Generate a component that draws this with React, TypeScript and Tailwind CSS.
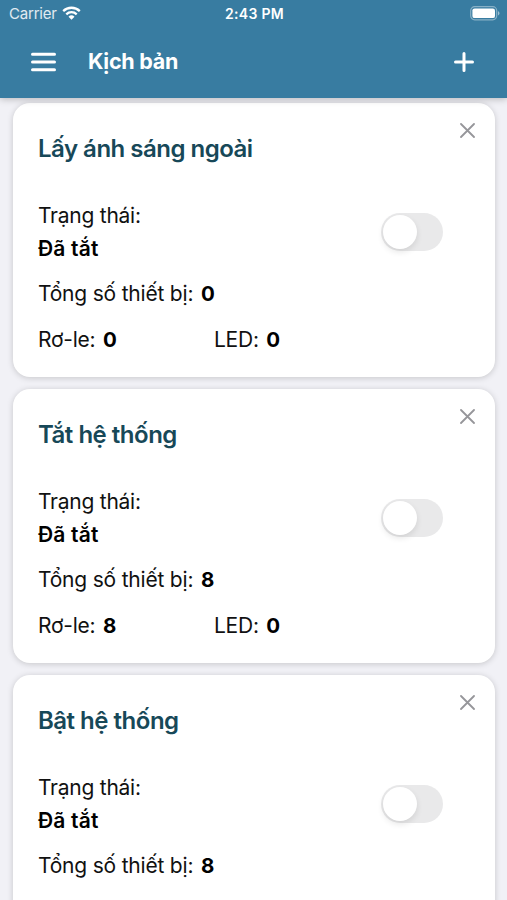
type Scenario = {
  id: number;
  name: string;
  total: number;
  relays?: number;
  leds?: number;
};

const scenarios: Scenario[] = [
  { id: 1, name: "Lấy ánh sáng ngoài", total: 0, relays: 0, leds: 0 },
  { id: 2, name: "Tắt hệ thống", total: 8, relays: 8, leds: 0 },
  { id: 3, name: "Bật hệ thống", total: 8 },
];

function StatusBar() {
  return (
    <div className="grid h-7 grid-cols-3 items-center pr-[7px] pl-[9px]">
      <div className="flex items-center gap-[5px] text-[15px] text-white/85">
        <span className="tracking-[-0.2px]">Carrier</span>
        <svg className="-mt-[2px]" width="19" height="14" viewBox="0 0 19 14" fill="none" stroke="white" strokeWidth="2.3">
          <path d="M1.2 5.1a12 12 0 0 1 16.6 0" />
          <path d="M4.3 8.3a7.5 7.5 0 0 1 10.4 0" />
          <path d="M9.5 13.8 6.5 10.7a4.3 4.3 0 0 1 6 0z" fill="white" stroke="none" />
        </svg>
      </div>
      <span className="-mt-px text-center text-[14px] font-semibold tracking-[0.3px] text-white">2:43 PM</span>
      <svg className="-mt-[2px] justify-self-end" width="31" height="15" viewBox="0 0 31 15">
        <rect x="1.7" y="0.7" width="26" height="13.1" rx="4" fill="none" stroke="white" strokeOpacity="0.4" strokeWidth="1.2" />
        <rect x="3.4" y="2.4" width="22.6" height="9.7" rx="2.2" fill="white" />
        <path d="M29 5.2v4.2c.9-.4 1.5-1.1 1.5-2.1S29.9 5.6 29 5.2z" fill="white" fillOpacity="0.5" />
      </svg>
    </div>
  );
}

function Header() {
  return (
    <header className="relative z-10 h-[97.5px] shrink-0 bg-[#387ca1] shadow-[0_1px_7px_rgba(0,0,0,0.25)]">
      <StatusBar />
      <div className="flex h-[67px] items-center pr-[33px] pl-[31px]">
        <button aria-label="Menu">
          <svg width="26" height="20" viewBox="0 0 26 20" stroke="white" strokeWidth="3" strokeLinecap="round">
            <path d="M1.5 2.3h22M1.5 10h22M1.5 17.7h22" />
          </svg>
        </button>
        <h1 className="ml-[31px] text-[21.5px] font-bold tracking-[-0.25px] text-white">Kịch bản</h1>
        <button aria-label="Add" className="ml-auto">
          <svg width="20" height="20" viewBox="0 0 20 20" stroke="white" strokeWidth="3" strokeLinecap="round">
            <path d="M10 1.5v17M1.5 10h17" />
          </svg>
        </button>
      </div>
    </header>
  );
}

function Toggle() {
  return (
    <button role="switch" aria-checked="false" aria-label="Trạng thái" className="flex h-[38px] w-[62px] items-center rounded-full bg-[#e9e9ea] px-[2px]">
      <span className="size-[34px] rounded-full bg-white shadow-[0_3px_6px_rgba(0,0,0,0.1)]" />
    </button>
  );
}

function Count({ value }: { value: number }) {
  return <b className="ml-[2px] text-[20.5px] font-bold text-black">{value}</b>;
}

function ScenarioCard({ name, total, relays, leds }: Scenario) {
  return (
    <article className="relative h-[273.5px] shrink-0 rounded-[17px] bg-white px-[25px] pt-[29.5px] text-[21px] leading-8 tracking-[-0.25px] text-[#111] shadow-[0_1px_6px_rgba(0,0,0,0.18)]">
      <button aria-label="Close" className="absolute top-5 right-[20px]">
        <svg width="15" height="15" viewBox="0 0 15 15" stroke="#96969a" strokeWidth="1.8" strokeLinecap="round">
          <path d="m1 1 13 13M14 1 1 14" />
        </svg>
      </button>
      <h2 className="text-[24px] font-semibold tracking-[-0.5px] text-[#174858]">{name}</h2>
      <div className="mt-[35px] flex items-center justify-between pr-[27px]">
        <div>
          <p>Trạng thái:</p>
          <p className="pt-px font-semibold tracking-[0.2px] text-black">Đã tắt</p>
        </div>
        <Toggle />
      </div>
      <p className="mt-[13px] tracking-[-0.2px]">
        Tổng số thiết bị: <Count value={total} />
      </p>
      {relays !== undefined && leds !== undefined && (
        <div className="mt-[14px] flex">
          <p className="w-[176px]">
            Rơ-le: <Count value={relays} />
          </p>
          <p>
            LED: <Count value={leds} />
          </p>
        </div>
      )}
    </article>
  );
}

export default function App() {
  return (
    <div className="flex h-[900px] w-[507px] flex-col overflow-hidden bg-[#f1f1f6] font-[Inter,sans-serif]">
      <Header />
      <main className="flex flex-col gap-[12.5px] pt-[5.5px] pr-[12px] pl-[13px]">
        {scenarios.map((scenario) => (
          <ScenarioCard key={scenario.id} {...scenario} />
        ))}
      </main>
    </div>
  );
}
